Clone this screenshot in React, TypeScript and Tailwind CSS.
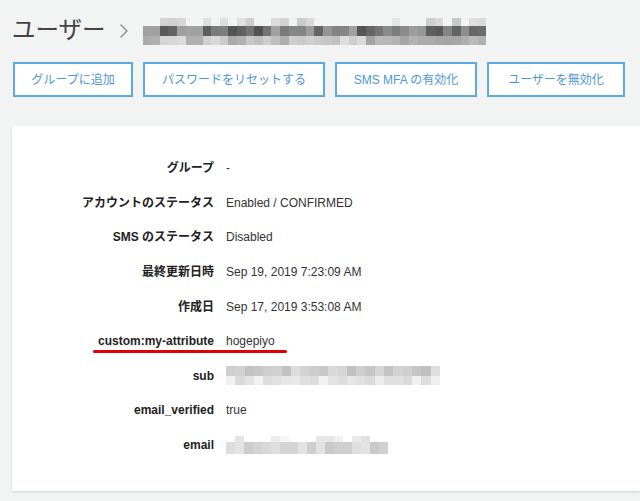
import React from "react";

function seeded(seed: number) {
  let s = seed;
  return () => {
    s = (s * 9301 + 49297) % 233280;
    return s / 233280;
  };
}

function gray(v: number) {
  const c = Math.round(v);
  return `rgb(${c},${c},${c})`;
}

type RowSpec = { h: number; min: number; max: number; lightChance?: number };

function Mosaic({
  cols,
  blockW,
  rows,
  seed,
  bg,
}: {
  cols: number;
  blockW: number;
  rows: RowSpec[];
  seed: number;
  bg: string;
}) {
  const rnd = seeded(seed);
  return (
    <div className="flex flex-col">
      {rows.map((r, ri) => (
        <div key={ri} className="flex">
          {Array.from({ length: cols }).map((_, ci) => {
            const light = r.lightChance !== undefined && rnd() < r.lightChance;
            const v = light ? -1 : r.min + rnd() * (r.max - r.min);
            return (
              <div
                key={ci}
                style={{
                  width: blockW,
                  height: r.h,
                  background: v < 0 ? bg : gray(v),
                }}
              />
            );
          })}
        </div>
      ))}
    </div>
  );
}

const buttons = [
  { label: "グループに追加", w: "w-[120px]" },
  { label: "パスワードをリセットする", w: "w-[182px]" },
  { label: "SMS MFA の有効化", w: "w-[142px]" },
  { label: "ユーザーを無効化", w: "w-[138px]" },
];

export default function App() {
  const font = {
    fontFamily: '"Liberation Sans", Arial, "Noto Sans CJK JP", sans-serif',
  };
  const rows: { label: string; value: React.ReactNode; mark?: boolean }[] = [
    { label: "グループ", value: "-" },
    { label: "アカウントのステータス", value: "Enabled / CONFIRMED" },
    { label: "SMS のステータス", value: "Disabled" },
    { label: "最終更新日時", value: "Sep 19, 2019 7:23:09 AM" },
    { label: "作成日", value: "Sep 17, 2019 3:53:08 AM" },
    { label: "custom:my-attribute", value: "hogepiyo", mark: true },
    {
      label: "sub",
      value: (
        <Mosaic
          cols={23}
          blockW={9.3}
          seed={7}
          bg="#ffffff"
          rows={[
            { h: 10, min: 190, max: 225 },
            { h: 9, min: 215, max: 242 },
          ]}
        />
      ),
    },
    { label: "email_verified", value: "true" },
    {
      label: "email",
      value: (
        <Mosaic
          cols={18}
          blockW={9}
          seed={31}
          bg="#ffffff"
          rows={[
            { h: 6, min: 225, max: 245, lightChance: 0.5 },
            { h: 12, min: 195, max: 228 },
          ]}
        />
      ),
    },
  ];

  return (
    <div
      className="w-[640px] h-[501px] bg-[#f2f3f3] overflow-hidden pt-[15px]"
      style={font}
    >
      <div className="flex items-center h-[32px] pl-[12px]">
        <span className="text-[23.5px] text-[#444] leading-none">ユーザー</span>
        <svg
          className="ml-[14px] mr-[15px]"
          width="8"
          height="14"
          viewBox="0 0 8 14"
          fill="none"
        >
          <polyline
            points="1,1 7,7 1,13"
            stroke="#8a8a8a"
            strokeWidth="1.4"
            strokeLinecap="round"
            strokeLinejoin="round"
          />
        </svg>
        <Mosaic
          cols={40}
          blockW={8.6}
          seed={3}
          bg="#f2f3f3"
          rows={[
            { h: 8, min: 200, max: 232, lightChance: 0.6 },
            { h: 10, min: 80, max: 165 },
            { h: 9, min: 160, max: 222 },
          ]}
        />
      </div>

      <div className="flex gap-[10px] pl-[13px] mt-[15px]">
        {buttons.map((b) => (
          <div
            key={b.label}
            className={`${b.w} h-[35px] border-2 border-[#5da9e2] bg-white flex items-center justify-center text-[12px] text-[#4f98d6]`}
          >
            {b.label}
          </div>
        ))}
      </div>

      <div className="ml-[12px] mt-[29px] h-[365px] bg-white shadow-[0_1px_2px_rgba(0,0,0,0.15)] pt-[25px]">
        {rows.map((r) => (
          <div
            key={r.label}
            className="relative grid grid-cols-[202px_1fr] gap-x-[12px] h-[34.6px] items-center"
          >
            <div className="text-right text-[12px] font-bold text-[#222]">
              {r.label}
            </div>
            <div className="text-[12px] text-[#333] flex items-center">
              {r.value}
            </div>
            {r.mark && (
              <div className="absolute left-[81px] top-[26px] w-[194px] h-[3.5px] rounded-full bg-[#e00000]" />
            )}
          </div>
        ))}
      </div>
    </div>
  );
}
